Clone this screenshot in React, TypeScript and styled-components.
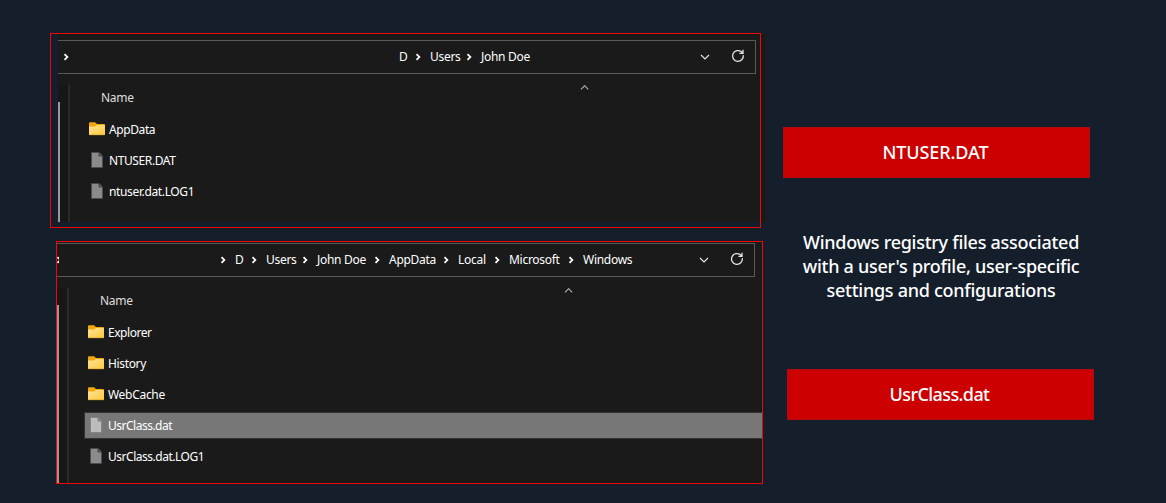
import React from "react";
import styled, { createGlobalStyle } from "styled-components";

const GlobalStyle = createGlobalStyle`
  html, body { margin: 0; padding: 0; background: #151e2b; }
  body { font-family: "Noto Sans", "Open Sans", sans-serif; color: #fff; }
  * { box-sizing: border-box; }
`;

const Page = styled.main`
  display: flex;
  width: 1166px;
  height: 503px;
  overflow: hidden;
  background: #151e2b;
`;

const Windows = styled.section`
  display: flex;
  flex: none;
  flex-direction: column;
  gap: 13px;
  width: 783px;
  padding: 33px 0 0 50px;
`;

const Frame = styled.div<{ $w: number; $h: number; $indent: number; $pad: string }>`
  position: relative;
  flex: none;
  width: ${(p) => p.$w}px;
  height: ${(p) => p.$h}px;
  margin-left: ${(p) => p.$indent}px;
  padding: ${(p) => p.$pad};

  &::after {
    content: "";
    position: absolute;
    inset: 0;
    border: 1px solid #f40606;
  }
`;

const Capture = styled.div<{ $w: number; $top: number }>`
  display: flex;
  flex-direction: column;
  width: ${(p) => p.$w}px;
  height: 100%;
  padding-top: ${(p) => p.$top}px;
  overflow: hidden;
  background: #1a1a1a;
`;

const AddressBar = styled.div`
  display: flex;
  align-items: center;
  flex: none;
  width: 698px;
  height: 34px;
  border: 1px solid #5a5a5a;
  border-left: 0;
`;

const Lead = styled.span<{ $before: number; $visible: number; $w: number }>`
  display: flex;
  flex: none;
  overflow: hidden;
  width: ${(p) => p.$visible}px;
  margin-left: ${(p) => p.$before}px;
  margin-right: ${(p) => p.$w - p.$before - p.$visible}px;
`;

const Crumb = styled.span<{ $w: number }>`
  flex: none;
  width: ${(p) => p.$w}px;
  font-size: 12px;
  line-height: 16px;
  letter-spacing: -0.28px;
  white-space: nowrap;
`;

const Separator = styled.svg`
  flex: none;
  width: 5px;
  height: 8px;
  margin-right: 9px;
`;

const BarActions = styled.div`
  display: flex;
  align-items: center;
  gap: 21px;
  margin-left: auto;
  padding: 0 10px 1px 0;
`;

const Body = styled.div`
  display: grid;
  grid-template-columns: 10px 2px 1fr;
  flex: 1;
  margin-top: 11px;
`;

const ScrollTrack = styled.div`
  padding-top: 17px;
  background: #171717;
`;

const ScrollThumb = styled.div`
  width: 2px;
  height: 100%;
  background: #999;
`;

const Divider = styled.div`
  background: #2a2a2a;
`;

const Listing = styled.div`
  padding-left: 15px;
`;

const Header = styled.div<{ $sort: number }>`
  display: grid;
  grid-template-columns: ${(p) => p.$sort}px 10px;
  height: 25px;
  margin-bottom: 6px;
  padding-left: 16px;
  color: #dedede;
  font-size: 12px;
  letter-spacing: -0.3px;
  line-height: 25px;
`;

const Row = styled.div<{ $selected?: boolean }>`
  display: flex;
  align-items: center;
  gap: 4px;
  height: 27px;
  margin: 2px 0 4px;
  padding-left: ${(p) => (p.$selected ? 3 : 4)}px;
  border: ${(p) => (p.$selected ? "1px solid #333" : "0")};
  border-right: 0;
  background: ${(p) => (p.$selected ? "#777" : "transparent")};
  font-size: 12px;
`;

const FileName = styled.span<{ $track: number }>`
  letter-spacing: ${(p) => p.$track}px;
  line-height: 16px;
`;

const Notes = styled.aside`
  display: flex;
  flex-direction: column;
  width: 320px;
  padding-top: 127px;
`;

const Label = styled.div<{ $indent: number; $track: number }>`
  width: 307px;
  height: 51px;
  margin-left: ${(p) => p.$indent}px;
  padding-right: 2px;
  border: 1px solid #b30a10;
  background: #c00;
  font-size: 18px;
  font-weight: 500;
  letter-spacing: ${(p) => p.$track}px;
  line-height: 49px;
  text-align: center;
`;

const Description = styled.p`
  width: 316px;
  height: 72px;
  margin: 52px 0 67px;
  font-size: 18px;
  font-weight: 500;
  letter-spacing: -0.27px;
  line-height: 24px;
  text-align: center;
  white-space: nowrap;
`;

const ChevronRight = () => (
  <Separator viewBox="0 0 5 8" fill="none" stroke="#fff" strokeWidth="1.7">
    <path d="M.5 1.2 3.4 4 .5 6.8" />
  </Separator>
);

const ChevronDown = () => (
  <svg width="10" height="6" viewBox="0 0 10 6" fill="none" stroke="#e4e4e4" strokeWidth="1.2">
    <path d="m1 1 4 4 4-4" />
  </svg>
);

const SortArrow = () => (
  <svg width="10" height="6" viewBox="0 0 10 6" fill="none" stroke="#b5b5b5" strokeWidth="1.1">
    <path d="m1 4.3 3.6-3.6 3.6 3.6" />
  </svg>
);

const RaisedIcon = styled.svg`
  flex: none;
  margin-bottom: 2px;
`;

const Refresh = () => (
  <RaisedIcon width="14" height="14" viewBox="0 0 14 14" fill="none" stroke="#e4e4e4" strokeWidth="1.3">
    <path d="M12.3 6.2A5.4 5.4 0 1 1 10.4 2.8L12 4.3M12 .8v3.6H8.4" />
  </RaisedIcon>
);

const Folder = () => (
  <RaisedIcon width="16" height="14" viewBox="0 0 16 14">
    <defs>
      <linearGradient id="folder" x1="0" y1="0" x2="1" y2="1">
        <stop offset="0" stopColor="#ffe49a" />
        <stop offset="1" stopColor="#ffc83a" />
      </linearGradient>
    </defs>
    <path d="M0 1.2Q0 .3 1 .3H6L8 2h7q1 0 1 1v5H0Z" fill="#f2a80c" />
    <path d="M0 4.6H6L8 3h7.2q.8 0 .8.8v8.4q0 .9-1 .9H1q-1 0-1-.9Z" fill="url(#folder)" />
    <path d="M.5 12.8h15" stroke="#d9a026" strokeWidth=".6" />
  </RaisedIcon>
);

const Document = ({ light }: { light?: boolean }) => (
  <RaisedIcon width="16" height="16" viewBox="0 0 16 16">
    <path
      d="M2.5.5H10L13.5 4V15.5H2.5Z"
      fill={light ? "#bcbcbc" : "#8b8b8b"}
      stroke={light ? "#858585" : "#4c4c4c"}
    />
    <path d="M10 .5V4h3.5" fill={light ? "#8c8c8c" : "#666"} stroke={light ? "#777" : "#333"} strokeWidth=".8" />
  </RaisedIcon>
);

type Entry = { name: string; folder?: boolean; selected?: boolean; track: number };
type Step = { text: string; w: number };

const Explorer = ({ path, entries, sort }: { path: React.ReactNode; entries: Entry[]; sort: number }) => (
  <>
    <AddressBar>
      {path}
      <BarActions>
        <ChevronDown />
        <Refresh />
      </BarActions>
    </AddressBar>
    <Body>
      <ScrollTrack>
        <ScrollThumb />
      </ScrollTrack>
      <Divider />
      <Listing>
        <Header $sort={sort}>
          <span>Name</span>
          <SortArrow />
        </Header>
        {entries.map((e) => (
          <Row key={e.name} $selected={e.selected}>
            {e.folder ? <Folder /> : <Document light={e.selected} />}
            <FileName $track={e.track}>{e.name}</FileName>
          </Row>
        ))}
      </Listing>
    </Body>
  </>
);

const Crumbs = ({ steps }: { steps: Step[] }) => (
  <>
    {steps.map((s, i) => (
      <React.Fragment key={s.text}>
        {i > 0 && <ChevronRight />}
        <Crumb $w={s.w}>{s.text}</Crumb>
      </React.Fragment>
    ))}
  </>
);

const profilePath: Step[] = [
  { text: "D", w: 17 },
  { text: "Users", w: 37 },
  { text: "John Doe", w: 58 },
];

const classPath: Step[] = [
  { text: "D", w: 17 },
  { text: "Users", w: 37 },
  { text: "John Doe", w: 58 },
  { text: "AppData", w: 55 },
  { text: "Local", w: 37 },
  { text: "Microsoft", w: 60 },
  { text: "Windows", w: 60 },
];

const profileFiles: Entry[] = [
  { name: "AppData", folder: true, track: -0.4 },
  { name: "NTUSER.DAT", track: -0.4 },
  { name: "ntuser.dat.LOG1", track: -0.36 },
];

const classFiles: Entry[] = [
  { name: "Explorer", folder: true, track: -0.45 },
  { name: "History", folder: true, track: -0.35 },
  { name: "WebCache", folder: true, track: -0.3 },
  { name: "UsrClass.dat", selected: true, track: -0.5 },
  { name: "UsrClass.dat.LOG1", track: -0.48 },
];

export default function App() {
  return (
    <Page>
      <GlobalStyle />
      <Windows>
        <Frame $w={711} $h={195} $indent={0} $pad="1px 0 6px 8px">
          <Capture $w={708} $top={6}>
            <Explorer
              path={
                <>
                  <Lead $before={6} $visible={5} $w={341}>
                    <ChevronRight />
                  </Lead>
                  <Crumbs steps={profilePath} />
                </>
              }
              entries={profileFiles}
              sort={479}
            />
          </Capture>
        </Frame>
        <Frame $w={707} $h={243} $indent={6} $pad="1px">
          <Capture $w={705} $top={1}>
            <Explorer
              path={
                <>
                  <Lead $before={0} $visible={1.5} $w={164}>
                    <ChevronRight />
                  </Lead>
                  <ChevronRight />
                  <Crumbs steps={classPath} />
                </>
              }
              entries={classFiles}
              sort={464}
            />
          </Capture>
        </Frame>
      </Windows>
      <Notes>
        <Label $indent={0} $track={-0.1}>NTUSER.DAT</Label>
        <Description>
          Windows registry files associated
          <br />
          with a user's profile, user-specific
          <br />
          settings and configurations
        </Description>
        <Label $indent={4} $track={-0.6}>UsrClass.dat</Label>
      </Notes>
    </Page>
  );
}
